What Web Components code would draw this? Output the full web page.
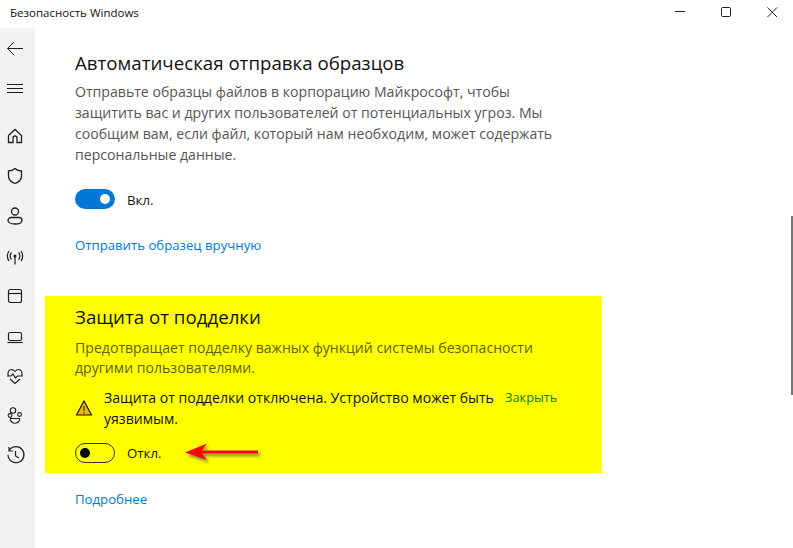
<!DOCTYPE html>
<html lang="ru">
<head>
<meta charset="utf-8">
<style>
  html, body { margin: 0; padding: 0; height: 100%; background: #fff; overflow: hidden; }
  body { font-family: "Open Sans", "Noto Sans", sans-serif; }
</style>
</head>
<body>
<sec-window>
  <sec-section heading="Автоматическая отправка образцов">
    <p slot="desc">Отправьте образцы файлов в корпорацию Майкрософт, чтобы защитить вас и других пользователей от потенциальных угроз. Мы сообщим вам, если файл, который нам необходим, может содержать персональные данные.</p>
    <sec-toggle checked>Вкл.</sec-toggle>
    <sec-link class="manual">Отправить образец вручную</sec-link>
  </sec-section>
  <sec-highlight>
    <h2>Защита от подделки</h2>
    <p>Предотвращает подделку важных функций системы безопасности другими пользователями.</p>
    <sec-warning>Защита от подделки отключена. Устройство может быть уязвимым.</sec-warning>
    <sec-toggle arrow>Откл.</sec-toggle>
  </sec-highlight>
  <sec-link class="more">Подробнее</sec-link>
</sec-window>
<script>
class SecNav extends HTMLElement {
  constructor() {
    super();
    this.attachShadow({ mode: "open" });
    this.shadowRoot.innerHTML = `
      <style>
      :host { display: block; width: 35px; flex: none; background: #f2f2f2; }
      svg { display: block; fill: none; stroke: #1f1f1f; stroke-width: 1; }
      </style>
      <svg width="35" height="520" viewBox="0 28 35 520">
        <path d="M23 48.500H7.500M14 42L7.500 48.500l6.500 6.500"/>
        <path d="M7 84.500h16M7 88.500h16M7 92.500h16"/>
        <path d="M8.500 142.500v-7l6.500-6 6.500 6v7h-4.500v-4.500a2 2 0 0 0-4 0v4.500z" stroke-width="1.300"/>
        <path d="M15 168.500c2 1.800 4.300 2.500 6.500 2.500v5c0 3.500-2.500 6-6.500 7.500-4-1.500-6.500-4-6.500-7.500v-5c2.200 0 4.500-.7 6.500-2.500z" stroke-width="1.300"/>
        <circle cx="15" cy="211.500" r="3.500" stroke-width="1.300"/>
        <path d="M11 217.500h8a3 3 0 0 1 3 3c0 2-3 3.500-7 3.500s-7-1.500-7-3.500a3 3 0 0 1 3-3z" stroke-width="1.300"/>
        <circle cx="15" cy="256" r="1.500" fill="#1f1f1f" stroke="none"/>
        <path d="M15 257v7.500M11.500 252.500a5 5 0 0 0 0 7M18.500 252.500a5 5 0 0 1 0 7M9 251a9 9 0 0 0 0 10M21 251a9 9 0 0 1 0 10" stroke-width="1.200"/>
        <rect x="8.500" y="289.500" width="13" height="13" rx="2" stroke-width="1.200"/>
        <path d="M8.500 293.500h13" stroke-width="1.200"/>
        <rect x="8.500" y="332.500" width="13" height="8" rx="1.500" stroke-width="1.200"/>
        <path d="M7.500 342.500h15" stroke-width="1.200"/>
        <path d="M8.500 376c-1.500-3 0-6.500 3-6.500 1.500 0 2.500.7 3.500 2 1-1.300 2-2 3.500-2 3 0 4.500 3.500 3 6.500" stroke-width="1.100"/>
        <path d="M7 376h4l2-2 2.500 4 2-2H23M10 379l5 4.500 5-4.500" stroke-width="1.100"/>
        <circle cx="13" cy="410.500" r="2.700" stroke-width="1.100"/>
        <circle cx="19.500" cy="414.500" r="1.900" stroke-width="1.100"/>
        <circle cx="10" cy="415.500" r="1.900" stroke-width="1.100"/>
        <path d="M10.500 418.500h9a2.500 2.500 0 0 1 0 1.500c-.7 2-2.500 3.200-4.500 3.200s-3.800-1.200-4.500-3.200a2.500 2.500 0 0 1 0-1.500z" stroke-width="1.100"/>
        <path d="M9.500 450a8 8 0 1 1-1.500 5M9 447v4h4M15.500 451v5l3.500 2" stroke-width="1.200"/>
      </svg>
    `;
  }
}
customElements.define("sec-nav", SecNav);

class SecTitlebar extends HTMLElement {
  constructor() {
    super();
    this.attachShadow({ mode: "open" });
    this.shadowRoot.innerHTML = `
      <style>
      :host { display: flex; height: 28px; background: #fff; flex: none; }
      span { font: 11.500px/26px "Open Sans", sans-serif; color: #111; padding-left: 10px; flex: 1; }
      svg { display: block; }
      </style>
      <span>Безопасность Windows</span>
      <svg width="153" height="28" viewBox="640 0 153 28" fill="none" stroke="#222" stroke-width="1">
        <path d="M675 11.500h10"/>
        <rect x="721.500" y="7.500" width="9" height="9" rx="1"/>
        <path d="M767.500 7.500l9.500 9.500M777 7.500l-9.500 9.500"/>
      </svg>
    `;
  }
}
customElements.define("sec-titlebar", SecTitlebar);

class SecWindow extends HTMLElement {
  constructor() {
    super();
    this.attachShadow({ mode: "open" });
    this.shadowRoot.innerHTML = `
      <style>
      :host { display: flex; flex-direction: column; height: 548px; position: relative; overflow: hidden; }
      .body { display: flex; flex: 1; min-height: 0; }
      main { flex: 1; padding: 22px 0 0 10px; min-width: 0; }
      .thumb { position: absolute; right: 0; top: 216px; width: 2px; height: 179px; background: #777; }
      </style>
      <sec-titlebar></sec-titlebar>
      <div class="body">
        <sec-nav></sec-nav>
        <main><slot></slot></main>
      </div>
      <div class="thumb"></div>
    `;
  }
}
customElements.define("sec-window", SecWindow);

class SecSection extends HTMLElement {
  constructor() {
    super();
    this.attachShadow({ mode: "open" });
    this.shadowRoot.innerHTML = `
      <style>
      :host { display: block; padding-left: 30px; width: 500px; }
      h2 { margin: 0 0 5px; font: 400 18.700px/26px "Open Sans", sans-serif; color: #111; }
      ::slotted(p) { margin: 0; font: 14.100px/21px "Open Sans", sans-serif; color: #555; }
      .rest { display: flex; flex-direction: column; align-items: flex-start; }
      </style>
      <h2></h2>
      <slot name="desc"></slot>
      <div class="rest"><slot></slot></div>
    `;
    this.shadowRoot.querySelector("h2").textContent = this.getAttribute("heading");
  }
}
customElements.define("sec-section", SecSection);

class SecToggle extends HTMLElement {
  constructor() {
    super();
    this.attachShadow({ mode: "open" });
    const on = this.hasAttribute("checked");
    const arrow = this.hasAttribute("arrow");
    this.shadowRoot.innerHTML = `
      <style>
      :host { display: flex; align-items: center; height: 20px; margin-top: 24px; font: 13.300px "Open Sans", sans-serif; color: #111; position: relative; }
      .track { box-sizing: border-box; width: 40px; height: 20px; border-radius: 10px; display: flex; align-items: center; margin-right: 12px;
        ${on ? "background:#0078d7; justify-content:flex-end; padding-right:5px;" : "border:1px solid #333; padding-left:4px;"} }
      .knob { width: 10px; height: 10px; border-radius: 50%; background: ${on ? "#fff" : "#000"}; }
      .label { margin-top: ${on ? 2 : 0}px; }
      svg { position: absolute; left: 108px; top: -5px; }
      </style>
      <div class="track"><div class="knob"></div></div>
      <div class="label"><slot></slot></div>
      ${arrow ? `<svg width="85" height="30" viewBox="0 0 85 30">
        <defs><filter id="s" x="-20%" y="-50%" width="140%" height="200%"><feDropShadow dx="2" dy="2.500" stdDeviation="1.500" flood-color="#555" flood-opacity=".75"/></filter></defs>
        <g filter="url(#s)"><path d="M2 14.500L24 5.500 19 12.500H75v3H19l5 6.500z" fill="#f00"/></g>
      </svg>` : ""}
    `;
  }
}
customElements.define("sec-toggle", SecToggle);

class SecLink extends HTMLElement {
  constructor() {
    super();
    this.attachShadow({ mode: "open" });
    this.shadowRoot.innerHTML = `
      <style>
      :host { display: block; font: 13.200px/20px "Open Sans", sans-serif; color: #0078d7; }
      :host(.manual) { margin-top: 26px; }
      :host(.more) { margin: 16px 0 0 30px; }
      </style>
      <slot></slot>
    `;
  }
}
customElements.define("sec-link", SecLink);

class SecHighlight extends HTMLElement {
  constructor() {
    super();
    this.attachShadow({ mode: "open" });
    this.shadowRoot.innerHTML = `
      <style>
      :host { display: block; box-sizing: border-box; width: 557px; height: 177px; margin-top: 41px; padding: 8px 30px 0; background: #ff0; }
      ::slotted(h2) { margin: 0 0 8px; font: 400 18.700px/26px "Open Sans", sans-serif; color: #111; }
      ::slotted(p) { margin: 0; width: 480px; font: 14.100px/20px "Open Sans", sans-serif; color: #5f5f00; }
      ::slotted(sec-toggle) { margin-top: 15px; }
      </style>
      <slot></slot>
    `;
  }
}
customElements.define("sec-highlight", SecHighlight);

class SecWarning extends HTMLElement {
  constructor() {
    super();
    this.attachShadow({ mode: "open" });
    this.shadowRoot.innerHTML = `
      <style>
      :host { display: flex; align-items: center; gap: 11px; margin-top: 9px; margin-bottom: -1px; font: 14.100px/21px "Open Sans", sans-serif; color: #111; }
      svg { flex: none; }
      .msg { width: 400px; }
      .close { color: #107c10; font-size: 12.800px; align-self: flex-start; white-space: nowrap; margin-left: -10px; }
      </style>
      <svg width="18" height="18" viewBox="0 0 18 18"><path d="M9 2l7.500 14h-15z" fill="#f5b800" stroke="#111" stroke-width="1.200" stroke-linejoin="round"/><path d="M9 7v5M9 13v1.500" stroke="#111" stroke-width="1"/></svg>
      <div class="msg"><slot></slot></div>
      <div class="close">Закрыть</div>
    `;
  }
}
customElements.define("sec-warning", SecWarning);
</script>
</body>
</html>
